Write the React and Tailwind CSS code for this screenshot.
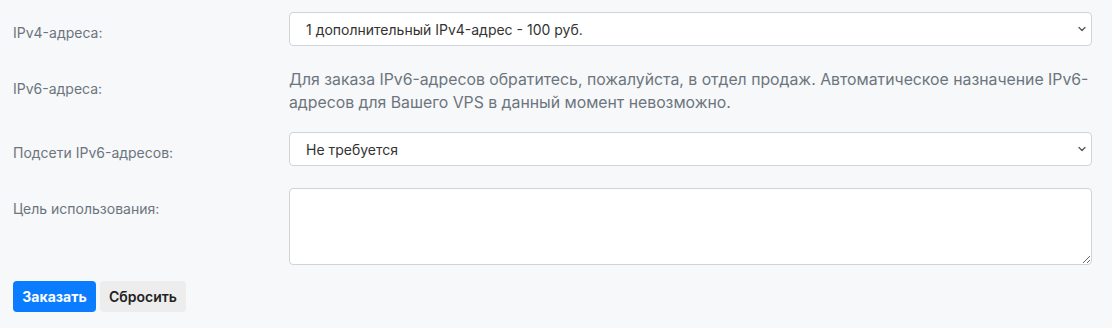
import { ChevronDown } from 'lucide-react'

const FONT = { fontFamily: 'Inter, "Noto Sans", sans-serif' }

function Row({ label, children, className = '' }) {
  return (
    <div className={`flex ${className}`}>
      <label className="w-[276px] shrink-0 pt-[11px] text-[14px] leading-5 text-[#6c757d]">{label}</label>
      <div className="flex-1">{children}</div>
    </div>
  )
}

function Select({ value }) {
  return (
    <div className="relative">
      <select
        defaultValue={value}
        className="w-full h-[34px] appearance-none rounded-[4px] border border-[#ced4da] bg-white pl-4 pr-8 text-[14px] text-[#333] outline-none"
      >
        <option>{value}</option>
      </select>
      <ChevronDown size={12} strokeWidth={2.5} className="pointer-events-none absolute right-[4px] top-[11px] text-[#555]" />
    </div>
  )
}

export default function App() {
  return (
    <div className="min-h-[328px] w-full bg-[#f7f8fa] pl-[13px] pr-[20px] pt-[12px]" style={FONT}>
      <Row label="IPv4-адреса:">
        <Select value="1 дополнительный IPv4-адрес - 100 руб." />
      </Row>

      <Row label="IPv6-адреса:" className="mt-[22px]">
        <p className="text-[15.8px] leading-[23px] text-[#6c757d]">
          Для заказа IPv6-адресов обратитесь, пожалуйста, в отдел продаж. Автоматическое назначение IPv6-адресов для Вашего VPS в данный момент невозможно.
        </p>
      </Row>

      <Row label="Подсети IPv6-адресов:" className="mt-[18px]">
        <Select value="Не требуется" />
      </Row>

      <Row label="Цель использования:" className="mt-[22px]">
        <textarea className="block w-full h-[77px] rounded-[4px] border border-[#ced4da] bg-white px-3 py-2 text-[14px] outline-none" />
      </Row>

      <div className="mt-[16px] flex gap-[4px]">
        <button className="h-[31px] w-[83px] rounded-[4px] bg-[#0a7cff] text-[14px] font-bold text-white">Заказать</button>
        <button className="h-[31px] w-[86px] rounded-[4px] bg-[#ededed] text-[14px] font-semibold text-[#222]">Сбросить</button>
      </div>
    </div>
  )
}
